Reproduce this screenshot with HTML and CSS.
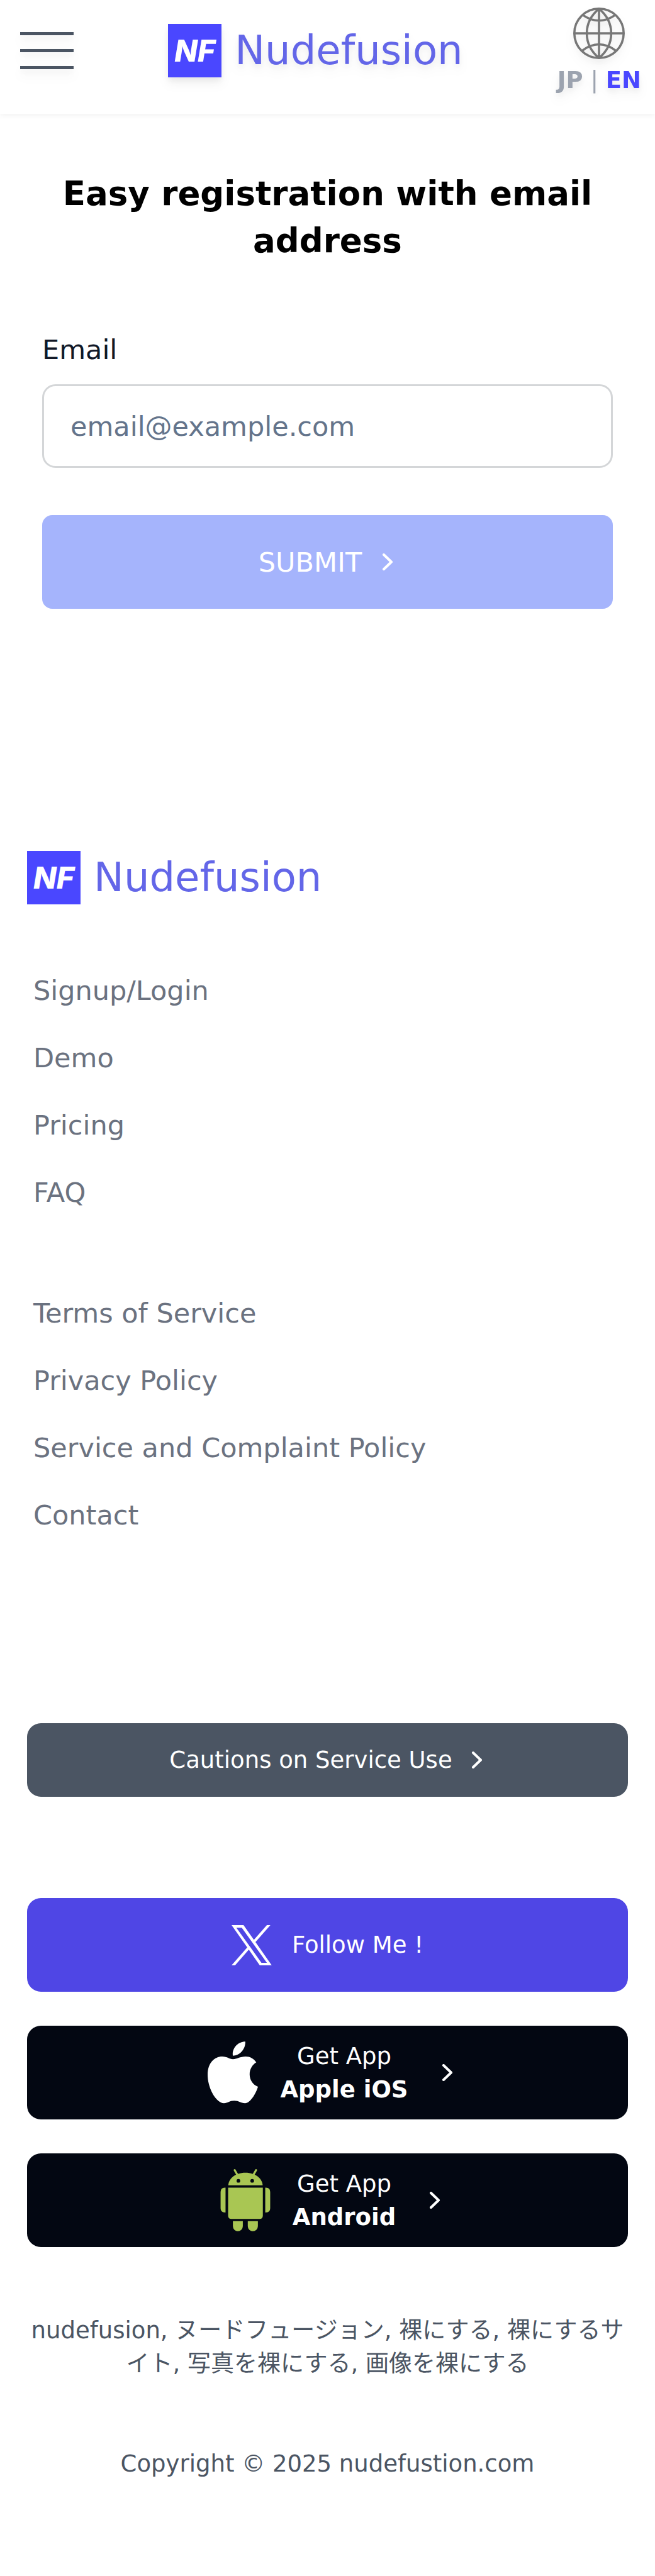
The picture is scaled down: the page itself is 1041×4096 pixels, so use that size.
FILE: index.html
```html
<!DOCTYPE html>
<html lang="en">
<head>
<meta charset="utf-8">
<meta name="viewport" content="width=device-width, initial-scale=1">
<title>Nudefusion</title>
<link rel="stylesheet" href="styles.css">
</head>
<body>
<header class="header">
  <button class="menu" type="button" aria-label="Menu">
    <span class="menu-bar"></span>
    <span class="menu-bar"></span>
    <span class="menu-bar"></span>
  </button>
  <a class="brand" href="#"><span class="brand-mark">NF</span><span class="brand-name">Nudefusion</span></a>
  <div class="lang">
    <svg class="globe" viewBox="165 42 276 276" aria-hidden="true">
      <circle cx="303" cy="180" r="132"/>
      <path d="M303 48V312M171 180H435M303 48C216 120 216 240 303 312M303 48C390 120 390 240 303 312M216 82Q303 142 390 82M210 275Q303 203 396 275"/>
    </svg>
    <div class="lang-links"><a href="#">JP</a> | <a class="current" href="#">EN</a></div>
  </div>
</header>

<main class="main">
  <h1 class="title">Easy registration with email address</h1>
  <form class="form">
    <label class="label" for="email">Email</label>
    <input class="input" id="email" type="email" placeholder="email@example.com">
    <button class="submit" type="button">SUBMIT
      <svg class="chevron" viewBox="0 0 27 27" aria-hidden="true"><path d="M7 2L19 13.5L7 25"/></svg>
    </button>
  </form>
</main>

<footer class="footer">
  <a class="brand" href="#"><span class="brand-mark">NF</span><span class="brand-name">Nudefusion</span></a>
  <nav class="nav">
    <ul class="links">
      <li><a href="#">Signup/Login</a></li>
      <li><a href="#">Demo</a></li>
      <li><a href="#">Pricing</a></li>
      <li><a href="#">FAQ</a></li>
    </ul>
    <ul class="links">
      <li><a href="#">Terms of Service</a></li>
      <li><a href="#">Privacy Policy</a></li>
      <li><a href="#">Service and Complaint Policy</a></li>
      <li><a href="#">Contact</a></li>
    </ul>
  </nav>
  <a class="action cautions" href="#">Cautions on Service Use
    <svg class="chevron" viewBox="0 0 27 27" aria-hidden="true"><path d="M7 2L19 13.5L7 25"/></svg>
  </a>
  <div class="actions">
    <a class="action follow" href="#">
      <svg class="icon-x" viewBox="0 0 24 24" aria-hidden="true"><path d="M14.258 10.152 23.176 0h-2.113l-7.747 8.813L7.133 0H0l9.352 13.328L0 23.973h2.113l8.176-9.309 6.531 9.309h7.133zM11.363 13.445l-.949-1.328L2.875 1.56h3.246l6.086 8.523.945 1.328 7.91 11.078h-3.246z"/></svg>
      Follow Me !
    </a>
    <a class="action app" href="#">
      <svg class="icon-app" viewBox="36 32 266 328" aria-hidden="true">
        <path fill="#fff" d="M170 125C150 125 140 111 113 111C72 111 36 145 36 208C36 280 82 358 122 358C143 358 150 345 176 345C203 345 210 358 234 358C262 358 292 305 302 271C275 260 258 235 258 205C258 178 272 155 293 142C280 122 260 111 237 111C208 111 190 125 170 125ZM169 107C164 68 195 32 235 32C237 72 206 107 169 107Z"/>
      </svg>
      <span class="app-text">Get App<strong>Apple iOS</strong></span>
      <svg class="chevron" viewBox="0 0 27 27" aria-hidden="true"><path d="M7 2L19 13.5L7 25"/></svg>
    </a>
    <a class="action app" href="#">
      <svg class="icon-app" viewBox="38 35 272 339" aria-hidden="true">
        <g fill="#a9c653">
          <path d="M81 123C83 88 118 55 174 55S266 88 268 123Z"/>
          <path d="M80 136H269V288Q269 306 251 306H98Q80 306 80 288Z"/>
          <path d="M66 136V271H62Q39 270 39 248V159Q39 137 62 136ZM282 136V271H286Q309 270 309 248V159Q309 137 286 136Z"/>
          <path d="M106 318H160V346A27 27 0 0 1 106 346ZM187 318H242V346A27 27 0 0 1 187 346Z"/>
        </g>
        <path d="M116 41L131 67M232 41L217 67" stroke="#a9c653" stroke-width="11" stroke-linecap="round"/>
        <circle cx="136" cy="99" r="10" fill="#030712"/>
        <circle cx="211" cy="99" r="10" fill="#030712"/>
      </svg>
      <span class="app-text">Get App<strong>Android</strong></span>
      <svg class="chevron" viewBox="0 0 27 27" aria-hidden="true"><path d="M7 2L19 13.5L7 25"/></svg>
    </a>
  </div>
  <p class="note" lang="ja">nudefusion, ヌードフュージョン, 裸にする, 裸にするサイト, 写真を裸にする, 画像を裸にする</p>
  <p class="note">Copyright © 2025 nudefustion.com</p>
</footer>
</body>
</html>
```
FILE: styles.css
```css
* {
  box-sizing: border-box;
}

body {
  margin: 0;
  background: #fff;
  color: #000;
  font-family: "DejaVu Sans", "Noto Sans CJK JP", sans-serif;
  font-size: 37px;
  line-height: 53px;
}

a {
  color: inherit;
  text-decoration: none;
}

button,
input {
  font: inherit;
}

svg {
  display: block;
  flex: none;
}

/* Header */
.header {
  display: flex;
  align-items: center;
  justify-content: space-between;
  padding: 12px 22px 33px 32px;
  box-shadow: 0 3px 8px rgba(0, 0, 0, 0.05);
}

.header > * {
  filter: drop-shadow(0 10px 8px rgba(0, 0, 0, 0.05)) drop-shadow(0 5px 5px rgba(0, 0, 0, 0.05));
}

.menu {
  display: flex;
  flex-direction: column;
  gap: 22px;
  width: 85px;
  padding: 0;
  border: 0;
  background: none;
}

.menu-bar {
  width: 100%;
  height: 5px;
  background: #4b5563;
}

.brand {
  display: flex;
  align-items: center;
  gap: 21px;
}

.brand-mark {
  display: flex;
  align-items: center;
  justify-content: center;
  width: 85px;
  height: 85px;
  background: #4a47ff;
  color: #fff;
  font-family: Inter, "DejaVu Sans", sans-serif;
  font-size: 48px;
  font-style: italic;
  font-weight: 800;
}

.brand-name {
  color: #6366e8;
  font-size: 64px;
  line-height: 85px;
}

.lang {
  display: flex;
  flex-direction: column;
  align-items: center;
  gap: 14px;
}

.globe {
  width: 82px;
  height: 82px;
  fill: none;
  stroke: #777;
  stroke-width: 12;
}

.lang-links {
  color: #9ca3af;
  line-height: 40px;
}

.lang-links a {
  font-weight: 700;
}

.lang-links .current {
  color: #4a47ff;
}

/* Registration form */
.main {
  padding: 89px 67px 0;
}

.title {
  margin: 0 0 104px;
  font-size: 53px;
  line-height: 75px;
  text-align: center;
}

.form {
  display: flex;
  flex-direction: column;
  font-size: 43px;
  line-height: 64px;
}

.label {
  margin-bottom: 23px;
  color: #111827;
}

.input {
  width: 100%;
  height: 133px;
  margin-bottom: 75px;
  padding: 0 42px;
  border: 3px solid #d4d6d8;
  border-radius: 21px;
  background: #fff;
  color: #111827;
}

.input::placeholder {
  color: #64748b;
  opacity: 1;
}

.submit {
  display: flex;
  align-items: center;
  justify-content: center;
  gap: 28px;
  height: 149px;
  border: 0;
  border-radius: 16px;
  background: #a5b4fc;
  color: #fff;
}

.chevron {
  width: 27px;
  height: 27px;
  fill: none;
  stroke: #fff;
  stroke-width: 4;
  stroke-linecap: round;
  stroke-linejoin: round;
}

/* Footer */
.footer {
  padding: 385px 43px 152px;
}

.nav {
  display: flex;
  flex-direction: column;
  gap: 128px;
  padding: 105px 10px 299px;
  color: #6b7280;
  font-size: 43px;
  line-height: 64px;
}

.links {
  display: flex;
  flex-direction: column;
  gap: 43px;
  margin: 0;
  padding: 0;
  list-style: none;
}

.action {
  display: flex;
  align-items: center;
  justify-content: center;
  height: 149px;
  border-radius: 22px;
  color: #fff;
}

.cautions {
  gap: 26px;
  height: 117px;
  margin-bottom: 161px;
  background: #4b5563;
}

.actions {
  display: flex;
  flex-direction: column;
  gap: 54px;
}

.follow {
  gap: 32px;
  background: #4f46e5;
}

.icon-x {
  width: 64px;
  height: 64px;
  fill: #fff;
}

.app {
  gap: 35px;
  background: #030712;
}

.icon-app {
  width: 80px;
  height: 99px;
}

.app-text {
  display: flex;
  flex-direction: column;
  align-items: center;
}

.app .chevron {
  margin: 0 -14px 0 14px;
}

.note {
  margin: 106px 0 0;
  color: #4b5563;
  text-align: center;
}
```
